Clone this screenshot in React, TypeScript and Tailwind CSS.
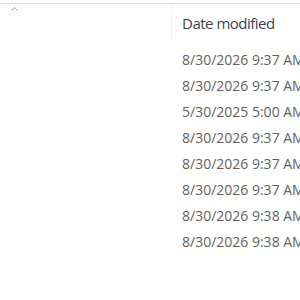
import React from "react";

const rows = [
  "8/30/2026 9:37 AM",
  "8/30/2026 9:37 AM",
  "5/30/2025 5:00 AM",
  "8/30/2026 9:37 AM",
  "8/30/2026 9:37 AM",
  "8/30/2026 9:37 AM",
  "8/30/2026 9:38 AM",
  "8/30/2026 9:38 AM",
];

export default function App() {
  return (
    <div
      className="w-[300px] h-[300px] bg-white overflow-hidden"
      style={{ fontFamily: '"Open Sans", "Noto Sans", sans-serif' }}
    >
      <div className="h-[3px] bg-white" />
      <div className="h-px bg-[#d9d9d9]" />
      <div className="flex h-[34px]">
        <div className="w-[172px] relative border-r border-[#f0f0f0]">
          <svg
            className="absolute left-[11px] top-[3px]"
            width="7"
            height="4"
            viewBox="0 0 7 4"
          >
            <path d="M0.5 3.5 L3.5 0.7 L6.5 3.5" fill="none" stroke="#9a9a9a" strokeWidth="1" />
          </svg>
        </div>
        <div className="pl-[10px] pt-[9px] text-[15px] leading-[20px] tracking-[-0.5px] text-[#3a4452] whitespace-nowrap">
          Date modified
        </div>
      </div>
      <div className="flex flex-col pt-[9px]">
        {rows.map((r, i) => (
          <div
            key={i}
            className="h-[26px] pl-[182px] text-[14px] leading-[26px] text-[#626262] whitespace-nowrap"
          >
            {r}
          </div>
        ))}
      </div>
    </div>
  );
}
